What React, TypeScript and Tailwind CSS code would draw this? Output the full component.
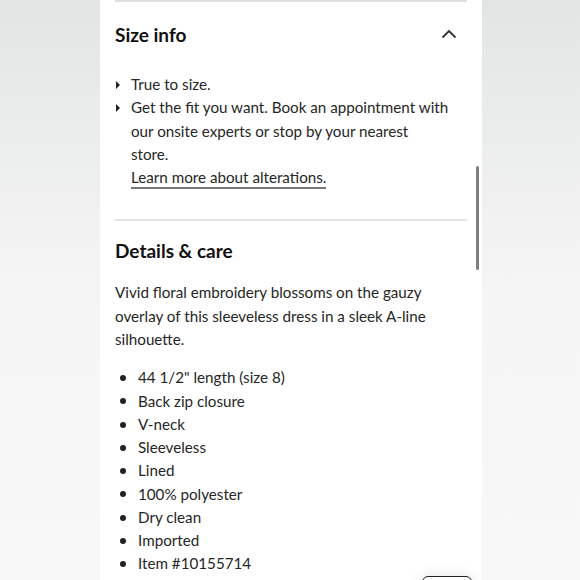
import React from 'react';

const details = [
  '44 1/2" length (size 8)',
  'Back zip closure',
  'V-neck',
  'Sleeveless',
  'Lined',
  '100% polyester',
  'Dry clean',
  'Imported',
  'Item #10155714',
];

function TriBullet() {
  return (
    <span className="flex w-[16px] h-[23.3px] shrink-0 items-center pl-[1px]">
      <svg width="4" height="8" viewBox="0 0 4 8">
        <path d="M0 0 L4 4 L0 8 Z" fill="#222" />
      </svg>
    </span>
  );
}

export default function App() {
  return (
    <div
      className="relative w-[580px] h-[580px] overflow-hidden bg-[linear-gradient(180deg,#e2e5e3_0%,#eceeed_25%,#f5f5f5_50%,#f8f8f8_100%)] text-[#262626]"
      style={{ fontFamily: 'Lato, "Open Sans", sans-serif' }}
    >
      <div className="relative ml-[100px] w-[382px] h-[580px] bg-white">
        <div className="px-[15px]">
          <div className="h-[2px] bg-[#dedede]" />

          <div className="mt-[21px] flex items-center justify-between h-[22px]">
            <h2 className="text-[19px] font-bold text-[#111] leading-none">Size info</h2>
            <svg width="16" height="10" viewBox="0 0 16 10" className="mr-[10px]" fill="none">
              <path d="M1.5 8.5 L8 2 L14.5 8.5" stroke="#333" strokeWidth="1.8" />
            </svg>
          </div>

          <ul className="mt-[28px] flex flex-col text-[15.2px] leading-[23.3px]">
            <li className="flex">
              <TriBullet />
              <span>True to size.</span>
            </li>
            <li className="flex">
              <TriBullet />
              <span>
                Get the fit you want. Book an appointment with our onsite experts or stop by your nearest
                <br />
                store.
              </span>
            </li>
            <li className="pl-[16px]">
              <a className="border-b-2 border-[#777] pb-[1px]">Learn more about alterations.</a>
            </li>
          </ul>

          <div className="mt-[30px] h-[2px] bg-[#e3e3e3]" />

          <h2 className="mt-[19px] text-[19px] font-bold text-[#111] leading-[22px]">Details &amp; care</h2>

          <p className="mt-[19px] text-[15.2px] leading-[23.3px]">
            Vivid floral embroidery blossoms on the gauzy overlay of this sleeveless dress in a sleek A-line silhouette.
          </p>

          <ul className="mt-[15px] flex flex-col text-[15.2px] leading-[23.25px]">
            {details.map((t) => (
              <li key={t} className="flex">
                <span className="flex w-[23px] h-[23.25px] shrink-0 items-center pl-[5px]">
                  <span className="w-[6px] h-[6px] rounded-full bg-[#222]" />
                </span>
                <span>{t}</span>
              </li>
            ))}
          </ul>
        </div>

        {/* scrollbar thumb */}
        <div className="absolute left-[376px] top-[166px] w-[3px] h-[104px] bg-[#7f7f7f] rounded-sm" />

        {/* floating button peeking in at the bottom */}
        <div className="absolute left-[322px] top-[576px] w-[50px] h-[20px] rounded-[6px] border border-[#222] bg-white shadow-[0_0_14px_rgba(0,0,0,0.12)]" />
      </div>
    </div>
  );
}
